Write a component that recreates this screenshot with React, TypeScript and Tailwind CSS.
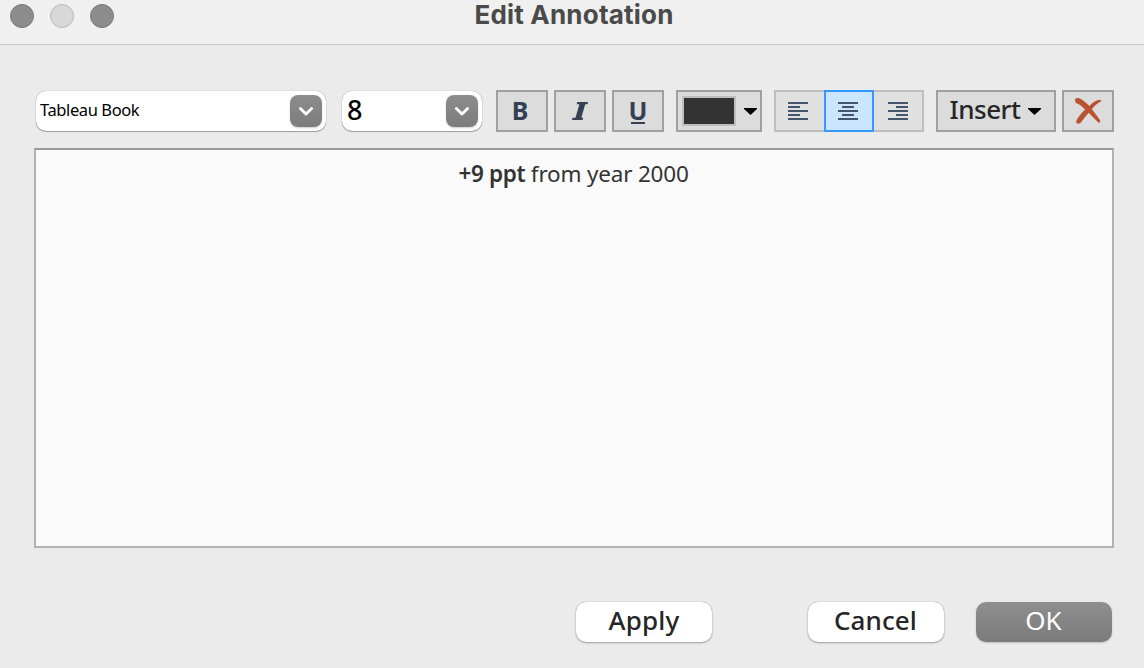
import type { ReactNode } from "react";

function Chevron() {
  return (
    <span className="flex size-8 items-center justify-center rounded-[8px] bg-linear-to-b from-[#8d8d8d] to-[#7c7c7c] shadow-[0_1px_2px_rgba(0,0,0,0.2)]">
      <svg width="16" height="10" viewBox="0 0 16 10" fill="none" stroke="white" strokeWidth="2.8" strokeLinecap="round" strokeLinejoin="round">
        <path d="M2.4 2.4 8 8.1 13.6 2.4" />
      </svg>
    </span>
  );
}

function Combo({ className, children }: { className: string; children: ReactNode }) {
  return (
    <div className={`flex h-10 items-center justify-between rounded-[10px] bg-white pr-1 pl-1 text-black shadow-[0_0_1px_rgba(0,0,0,0.45),0_1px_1px_rgba(0,0,0,0.3)] ${className}`}>
      {children}
      <Chevron />
    </div>
  );
}

function ToolButton({ className, label, children }: { className: string; label: string; children: ReactNode }) {
  return (
    <button aria-label={label} className={`flex h-[42px] items-center justify-center border-2 border-[#a0a0a0] bg-[#dcdcdc] ${className}`}>
      {children}
    </button>
  );
}

function Caret() {
  return (
    <svg width="13" height="7" viewBox="0 0 13 7" className="shrink-0">
      <path d="M0 0h13v1L6.5 7 0 1z" fill="#000" />
    </svg>
  );
}

function Lines({ xs }: { xs: number[] }) {
  return (
    <svg width="20" height="18" viewBox="0 0 20 18" fill="#44546a">
      {xs.map((x, i) => (
        <rect key={i} x={x} y={i * 4} width={i % 2 ? 12 : 20} height="2" />
      ))}
    </svg>
  );
}

function DialogButton({ className, children }: { className: string; children: ReactNode }) {
  return (
    <button className={`flex h-10 w-[136px] items-center justify-center rounded-[10px] pb-1 text-[26px] leading-none ${className}`}>
      {children}
    </button>
  );
}

export default function App() {
  return (
    <div className="flex h-[668px] w-[1144px] flex-col overflow-hidden bg-[#ebebeb] font-['Noto_Sans',sans-serif] text-[#262626]">
      <header className="grid h-[45px] shrink-0 grid-cols-[1fr_auto_1fr] border-b border-[#c6c6c6] bg-[#f0f0f0]">
        <div className="flex gap-4 pt-1 pl-[10px]">
          <span className="size-6 rounded-full border border-[#777] bg-[#8c8c8c]" />
          <span className="size-6 rounded-full border border-[#b9b9b9] bg-[#d8d8d8]" />
          <span className="size-6 rounded-full border border-[#777] bg-[#8c8c8c]" />
        </div>
        <h1 className="ml-1 h-7 text-[26px] leading-[30px] font-bold tracking-[0.2px] text-[#4a4a4a] [font-family:Inter,sans-serif]">Edit Annotation</h1>
      </header>

      <div className="flex h-[87px] shrink-0 pt-[45px] pl-9">
        <Combo className="mt-px w-[290px]">
          <span className="pb-px text-[16.5px] leading-none tracking-[-0.4px]">Tableau Book</span>
        </Combo>
        <Combo className="mt-px ml-4 w-[140px]">
          <span className="pb-1 pl-px text-[27px] leading-none font-medium">8</span>
        </Combo>
        <div className="ml-[14px] flex gap-[6px] text-[#344154]">
          <ToolButton className="w-[52px] pr-1 pb-[2px]" label="Bold">
            <span className="text-[25px] leading-none font-bold">B</span>
          </ToolButton>
          <ToolButton className="w-[52px]" label="Italic">
            <svg width="16" height="18" viewBox="0 0 16 18" fill="#344154" className="mr-[1px]">
              <path d="M5.3 0H16L15.5 2.2H13.2L9.3 15.8H11.2L10.6 18H0L.6 15.8H3.5L7.4 2.2H4.7Z" />
            </svg>
          </ToolButton>
          <ToolButton className="w-[52px]" label="Underline">
            <span className="mt-[2px] flex h-[24px] w-[14px] justify-center border-b-2 border-[#344154]">
              <span className="text-[25px] leading-[21px] font-bold">U</span>
            </span>
          </ToolButton>
        </div>
        <ToolButton className="ml-3 w-[86px] gap-2 pl-px" label="Text color">
          <span className="h-[30px] w-[54px] border-2 border-[#bebebe] bg-[#333]" />
          <Caret />
        </ToolButton>
        <div className="ml-3 flex h-[42px]">
          <button aria-label="Align left" className="flex w-[50px] items-center justify-center border-2 border-r-0 border-[#bebebe] bg-[#e0e0e0] pr-1">
            <Lines xs={[0, 0, 0, 0, 0]} />
          </button>
          <button aria-label="Align center" className="flex w-[50px] items-center justify-center border-2 border-[#3399ff] bg-[#cce5ff] pr-[2px]">
            <Lines xs={[0, 4, 0, 4, 0]} />
          </button>
          <button aria-label="Align right" className="flex w-[50px] items-center justify-center border-2 border-l-0 border-[#bebebe] bg-[#e0e0e0]">
            <Lines xs={[0, 8, 0, 8, 0]} />
          </button>
        </div>
        <ToolButton className="ml-3 w-[120px] gap-[7px] pr-[2px]" label="Insert">
          <span className="pb-1 text-[26px] leading-none font-medium tracking-[-0.5px] text-[#262626]">Insert</span>
          <Caret />
        </ToolButton>
        <ToolButton className="ml-[6px] w-[52px]" label="Clear">
          <svg width="28" height="28" viewBox="0 0 28 28" fill="#b95433">
            <path d="M.9 2.7C1.4.9 3.5.6 5.8 1.5 9.6 3.4 12.6 6.2 15.3 8.9 18.8 5.5 22.3 3 26.6 2.8L27.2 4.3C23.8 6 20.6 8.9 17.8 12.2 20.8 15.8 24 20 26.5 24L25 26C21.2 22.6 18.2 19.4 14.8 15.8 12 18.7 9.4 22.3 7 25.6 5.3 27.5 1.7 26.9 2.2 24.2 3.6 20.3 7.6 16 11 12.4 8.4 9.8 5.3 7.2 1.6 5.8Z" />
          </svg>
        </ToolButton>
      </div>

      <div className="mt-4 ml-[34px] h-[400px] w-[1080px] shrink-0 border-2 border-[#b2b2b2] border-t-[#999] bg-[#fafafa] pt-2 text-center text-[22.5px] leading-[32px] tracking-[-0.2px] text-[#333]">
        <p className="pr-px"><b className="font-semibold tracking-[-0.35px]">+9 ppt</b> from year 2000</p>
      </div>

      <footer className="mt-[54px] flex justify-end pr-8">
        <DialogButton className="bg-white font-medium tracking-[0.2px] shadow-[0_0_1px_rgba(0,0,0,0.4),0_1px_2px_rgba(0,0,0,0.3)]">Apply</DialogButton>
        <DialogButton className="ml-24 bg-white pr-px font-medium tracking-[0.1px] shadow-[0_0_1px_rgba(0,0,0,0.4),0_1px_2px_rgba(0,0,0,0.3)]">Cancel</DialogButton>
        <DialogButton className="ml-8 bg-linear-to-b from-[#8f8f8f] to-[#7b7b7b] pr-px text-white shadow-[0_1px_2px_rgba(0,0,0,0.2)]">OK</DialogButton>
      </footer>
    </div>
  );
}
